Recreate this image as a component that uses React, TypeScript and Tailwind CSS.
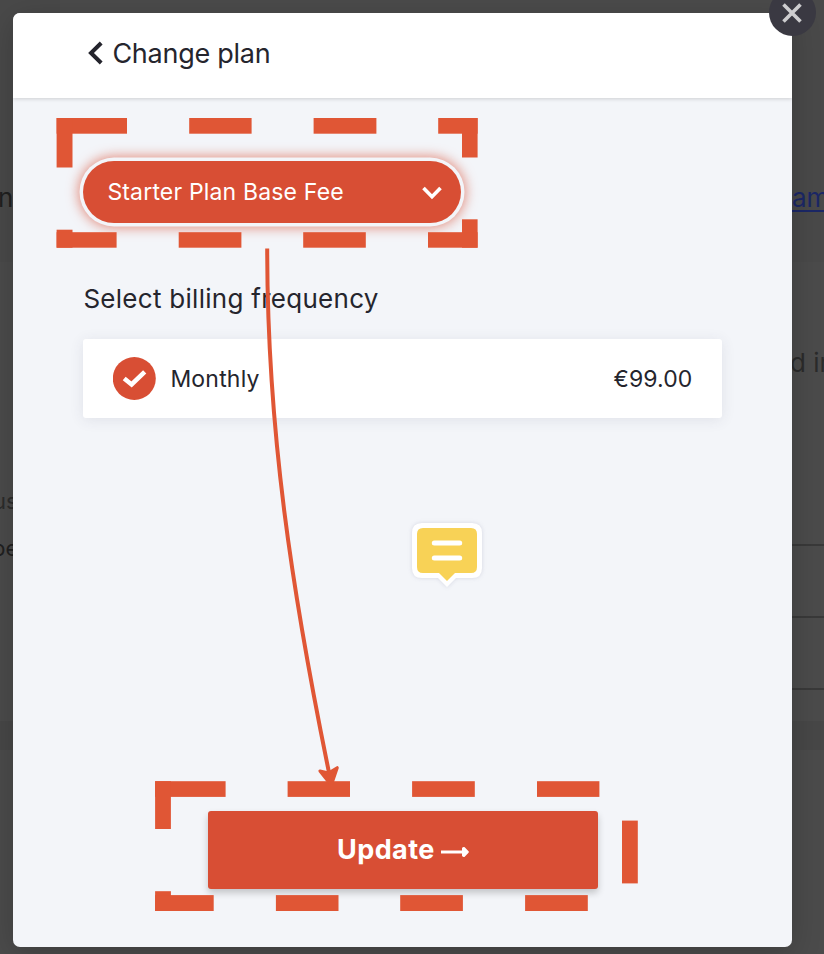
import React from "react";

type Box = [number, number, number, number];

const highlightDashes: Box[] = [
  [56.6, 118, 70.4, 15.7],
  [189.2, 118, 62.4, 15.7],
  [313.6, 118, 62.8, 15.7],
  [438.2, 118, 39.4, 15.7],
  [56.6, 118, 15.9, 49.5],
  [462, 118, 15.6, 39.5],
  [56.6, 229.7, 15.9, 18],
  [462, 219.3, 15.6, 28.4],
  [56.6, 232.2, 60, 15.5],
  [178.7, 232.2, 62.7, 15.5],
  [303.2, 232.2, 62.6, 15.5],
  [428, 232.2, 49.6, 15.5],
  [155.1, 781.2, 70.5, 15.7],
  [287.6, 781.2, 62.4, 15.7],
  [412.1, 781.2, 62.7, 15.7],
  [537, 781.2, 62.4, 15.7],
  [155.1, 781.2, 15.8, 47.8],
  [155.1, 891.2, 15.8, 19.8],
  [155.1, 895.1, 58.6, 15.9],
  [275.9, 895.1, 62.6, 15.9],
  [400.2, 895.1, 62.7, 15.9],
  [525.1, 895.1, 62.7, 15.9],
  [622, 820.6, 15.8, 62.8],
];

function Backdrop() {
  return (
    <div className="absolute inset-0 flex justify-between overflow-hidden bg-[#4b4b4b] text-[26px] leading-[30px] text-[#202020]">
      <div className="h-full w-[60px]">
        <div className="h-[262px] bg-black/[0.02] pt-[183px]">
          <span className="-ml-[2px]">n</span>
        </div>
        <div className="h-[459px] pt-[224px] text-[22px]">
          <div className="h-[47px] text-[#2c2c2c]">
            <span className="-ml-[7px]">us</span>
          </div>
          <div>
            <span className="-ml-[8px]">be</span>
          </div>
        </div>
        <div className="h-[29px] bg-black/5" />
      </div>
      <div className="h-full w-[42px] overflow-hidden pl-[10px] whitespace-nowrap">
        <div className="h-[262px] bg-black/[0.02] pt-[183px] text-[#1b2766]">
          <span className="underline decoration-2 underline-offset-[3px]">am</span>
        </div>
        <div className="h-[282px] pt-[86px] text-[#2b2b2b]">
          <span className="-ml-[2px]">d in</span>
        </div>
        <div className="h-[72px] border-t-2 border-[#393939]" />
        <div className="h-[72px] border-t-2 border-[#393939]" />
        <div className="h-[33px] border-t-2 border-[#393939]" />
        <div className="h-[29px] bg-black/5" />
      </div>
    </div>
  );
}

function Annotations() {
  return (
    <svg className="pointer-events-none absolute inset-0" width="824" height="954" viewBox="0 0 824 954" fill="none">
      <g fill="#e05635">
        {highlightDashes.map(([x, y, w, h], i) => (
          <rect key={i} x={x} y={y} width={w} height={h} />
        ))}
      </g>
      <path d="M267.2 248.5C267.2 430 292 592 329.5 775" stroke="#e05635" strokeWidth="4" />
      <path
        d="M320 771L328.5 773L337.2 767.8L332 783L329.5 783Z"
        fill="#e05635"
        stroke="#e05635"
        strokeWidth="3.2"
        strokeLinejoin="round"
      />
    </svg>
  );
}

function NoteMarker() {
  return (
    <svg
      className="absolute top-[518px] left-[407px] drop-shadow-[0_0_2px_rgba(80,80,120,0.18)]"
      width="80"
      height="74"
      viewBox="0 0 80 74"
      fill="none"
    >
      <path
        d="M15 5H65Q75 5 75 15V50Q75 60 65 60H49L40 69L31 60H15Q5 60 5 50V15Q5 5 15 5Z"
        fill="#fff"
      />
      <path
        d="M16 10H64Q70 10 70 16V49Q70 55 64 55H48L40 63L32 55H16Q10 55 10 49V16Q10 10 16 10Z"
        fill="#f8d256"
      />
      <path d="M27.3 25H52.7M27.3 40H52.7" stroke="#fff" strokeWidth="5" strokeLinecap="round" />
    </svg>
  );
}

export default function App() {
  return (
    <div className="relative h-[954px] w-[824px] overflow-hidden pt-[12.5px] pl-[13.4px] font-['Inter',sans-serif] text-[#25252d]">
      <Backdrop />
      <main className="relative flex h-[934.5px] w-[779px] flex-col overflow-hidden rounded-[7px] bg-[#f3f5f9] shadow-[0_6px_30px_rgba(0,0,0,0.2)]">
        <header className="relative flex h-[85.5px] shrink-0 items-center bg-white pl-[74.5px] shadow-[0_1px_4px_rgba(0,0,0,0.16)]">
          <svg className="-mt-[4px]" width="16" height="24" viewBox="0 0 16 24" fill="none">
            <path d="M13.2 2L3 12L13.2 22" stroke="currentColor" strokeWidth="4" />
          </svg>
          <h1 className="-mt-[2px] ml-[8.5px] text-[27px] leading-8 tracking-[-0.26px]">Change plan</h1>
        </header>
        <section className="flex flex-1 flex-col px-[70px] pt-[62.5px]">
          <button className="flex h-[62px] w-[378px] items-center justify-between rounded-full bg-[#d84e34] pr-[18px] pl-6 text-[23px] text-white shadow-[0_0_0_3.5px_#f3f5f9,0_0_12px_5px_rgba(216,78,52,0.6)]">
            <span className="mt-[2px] tracking-[0.17px]">Starter Plan Base Fee</span>
            <svg className="mt-[3px]" width="22" height="16" viewBox="0 0 22 16" fill="none">
              <path d="M2.5 3L11 11.7L19.5 3" stroke="#fff" strokeWidth="3.6" />
            </svg>
          </button>
          <h2 className="mt-[60.5px] text-[26px] leading-8 tracking-[0.28px]">Select billing frequency</h2>
          <div className="mt-[24px] flex h-[78.5px] w-[639px] items-center rounded-[3px] bg-white px-[30px] text-[23px] shadow-[0_2px_14px_rgba(60,60,90,0.1)]">
            <svg width="43" height="43" viewBox="0 0 43 43" fill="none">
              <circle cx="21.3" cy="21.5" r="21.5" fill="#d84e34" />
              <path d="M11.2 21.5L18.6 27.5L31.7 14.8" stroke="#fff" strokeWidth="4.6" />
            </svg>
            <span className="mt-[2px] ml-[14px] tracking-[0.2px]">Monthly</span>
            <span className="mt-[2px] ml-auto tracking-[0.1px]">€99.00</span>
          </div>
          <button className="mt-auto mb-[58.5px] flex h-[78px] w-[390px] items-center justify-center self-center rounded-[3px] bg-[#d84e34] text-[27px] font-bold text-white shadow-[0_4px_7px_rgba(0,0,0,0.2)]">
            <span className="mt-[2px] tracking-[0.4px]">Update</span>
            <svg className="mt-[4px] ml-[6px]" width="28" height="12" viewBox="0 0 28 12" fill="none">
              <path d="M0 6H23" stroke="#fff" strokeWidth="3" />
              <path d="M22 2.5L23 2L26.8 6L23 10L22 9.5Z" fill="#fff" stroke="#fff" strokeWidth="2" strokeLinejoin="round" />
            </svg>
          </button>
        </section>
      </main>
      <button className="absolute -top-[11px] left-[768.6px] flex h-[47px] w-[47px] items-center justify-center rounded-full bg-[#3a3942]">
        <svg width="22" height="22" viewBox="0 0 22 22" fill="none">
          <path d="M2.5 2.5L19.5 19.5M19.5 2.5L2.5 19.5" stroke="#cdcdcf" strokeWidth="3.6" />
        </svg>
      </button>
      <Annotations />
      <NoteMarker />
    </div>
  );
}
